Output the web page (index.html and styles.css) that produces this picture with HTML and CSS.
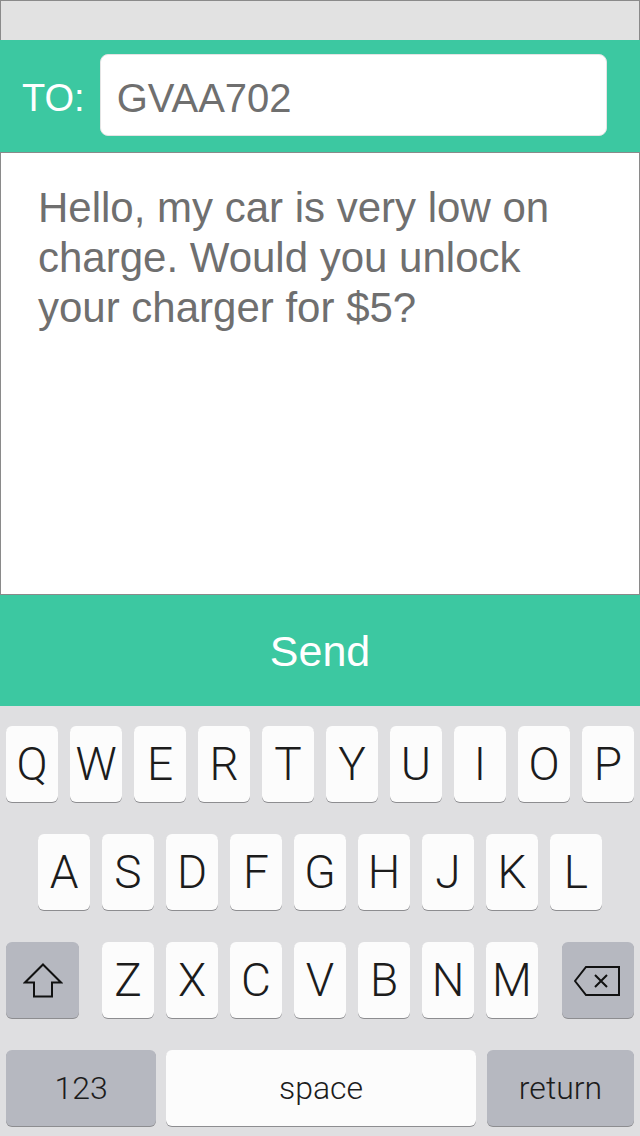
FILE: index.html
```html
<!DOCTYPE html>
<html>
<head>
<meta charset="utf-8">
<link rel="stylesheet" href="styles.css">
</head>
<body>
<div class="screen">
  <div class="status"></div>
  <div class="to-bar">
    <div class="to-label">TO:</div>
    <div class="to-field">GVAA702</div>
  </div>
  <div class="message">Hello, my car is very low on charge. Would you unlock your charger for $5?</div>
  <div class="send">Send</div>
  <div class="keyboard">
    <div class="row row1">
      <div class="key">Q</div><div class="key">W</div><div class="key">E</div><div class="key">R</div><div class="key">T</div><div class="key">Y</div><div class="key">U</div><div class="key">I</div><div class="key">O</div><div class="key">P</div>
    </div>
    <div class="row row2">
      <div class="key">A</div><div class="key">S</div><div class="key">D</div><div class="key">F</div><div class="key">G</div><div class="key">H</div><div class="key">J</div><div class="key">K</div><div class="key">L</div>
    </div>
    <div class="row row3">
      <div class="key mod shift">
        <svg width="40" height="35" viewBox="0 0 40 35"><path d="M20 1.5 L38 19.5 L29 19.5 L29 33.5 L11 33.5 L11 19.5 L2 19.5 Z" fill="none" stroke="#111" stroke-width="2" stroke-linejoin="miter"/></svg>
      </div>
      <div class="letters">
        <div class="key">Z</div><div class="key">X</div><div class="key">C</div><div class="key">V</div><div class="key">B</div><div class="key">N</div><div class="key">M</div>
      </div>
      <div class="key mod back">
        <svg width="46" height="30" viewBox="0 0 46 30"><path d="M12 1 L45 1 L45 29 L12 29 L1 15 Z" fill="none" stroke="#111" stroke-width="2"/><path d="M21 9 L33 21 M33 9 L21 21" stroke="#111" stroke-width="2"/></svg>
      </div>
    </div>
    <div class="row row4">
      <div class="key mod small k123">123</div>
      <div class="key small space">space</div>
      <div class="key mod small ret">return</div>
    </div>
  </div>
</div>
</body>
</html>
```
FILE: styles.css
```css
* { box-sizing: border-box; }
html, body { margin: 0; padding: 0; }
body {
  width: 640px;
  height: 1136px;
  overflow: hidden;
  font-family: "Liberation Sans", Arial, Helvetica, sans-serif;
  background: #dfdfe1;
}
.screen {
  width: 640px;
  height: 1136px;
  display: flex;
  flex-direction: column;
}
.status {
  height: 40px;
  background: #e2e2e2;
  border: 1px solid #8a8a8a;
  border-bottom: none;
}
.to-bar {
  height: 112px;
  background: #3cc8a1;
  display: flex;
  align-items: flex-start;
  padding: 14px 33px 0 22px;
  gap: 15px;
}
.to-label {
  color: #fff;
  font-size: 38px;
  height: 82px;
  line-height: 76px;
  padding-top: 6px;
}
.to-field {
  flex: 1;
  height: 82px;
  background: #fff;
  border: 1px solid #e4e4e4;
  border-radius: 8px;
  color: #6f6f6f;
  font-size: 40px;
  line-height: 74px;
  padding: 6px 0 0 16px;
}
.message {
  height: 443px;
  background: #fff;
  border: 1px solid #8a8a8a;
  padding: 30px 38px 0 37px;
  color: #6f6f6f;
  font-size: 42px;
  line-height: 50px;
}
.send {
  height: 111px;
  background: #3cc8a1;
  color: #fff;
  font-size: 43px;
  display: flex;
  align-items: center;
  justify-content: center;
  padding-top: 2px;
}
.keyboard {
  flex: 1;
  background: #dfdfe1;
  padding: 20px 6px 10px 6px;
  display: flex;
  flex-direction: column;
  gap: 32px;
}
.row {
  display: flex;
  height: 76px;
  gap: 12px;
}
.row2 { padding: 0 32px; }
.letters { display: flex; gap: 12px; margin: 0 12px 0 11px; }
.key {
  width: 52px;
  height: 76px;
  background: #fcfcfc;
  border-radius: 6px;
  box-shadow: 0 1px 0 #8d8d90;
  display: flex;
  align-items: center;
  justify-content: center;
  font-family: Roboto, "Liberation Sans", sans-serif;
  font-weight: 300;
  font-size: 46px;
  color: #1c1c1c;
}
.key.mod { background: #b6b8c0; }
.shift { width: 73px; }
.shift svg { margin-top: 1px; }
.back { width: 72px; }
.back svg { margin-left: -2px; margin-top: 1px; }
.key.small { font-size: 32px; }
.row4 { gap: 0; }
.k123 { width: 150px; }
.space { width: 310px; margin-left: 10px; }
.ret { width: 147px; margin-left: 11px; }
```
